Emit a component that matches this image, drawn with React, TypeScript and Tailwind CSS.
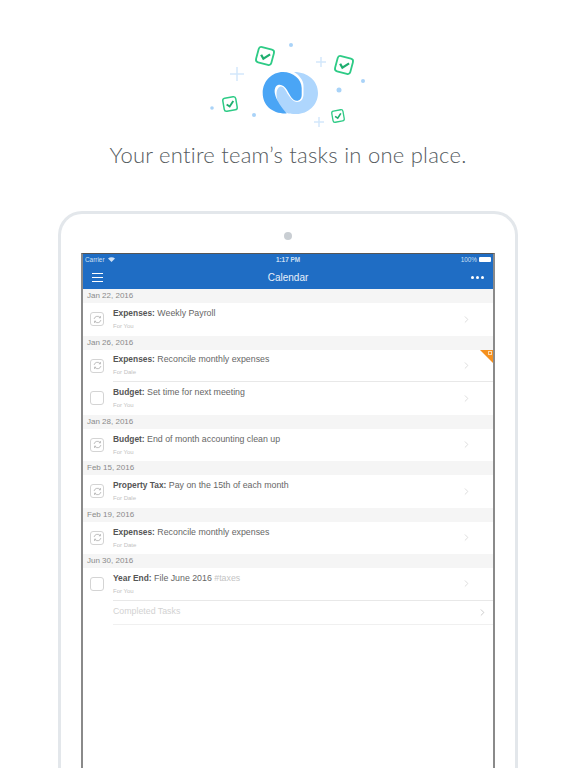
import React from 'react';
import { ChevronRight } from 'lucide-react';

type Task = { project: string; title: string; tag?: string; sub: string; repeat?: boolean; flag?: boolean };
type Section = { date: string; tasks: Task[] };

const SECTIONS: Section[] = [
  { date: 'Jan 22, 2016', tasks: [{ project: 'Expenses:', title: 'Weekly Payroll', sub: 'For You', repeat: true }] },
  {
    date: 'Jan 26, 2016',
    tasks: [
      { project: 'Expenses:', title: 'Reconcile monthly expenses', sub: 'For Dale', repeat: true, flag: true },
      { project: 'Budget:', title: 'Set time for next meeting', sub: 'For You' },
    ],
  },
  { date: 'Jan 28, 2016', tasks: [{ project: 'Budget:', title: 'End of month accounting clean up', sub: 'For You', repeat: true }] },
  { date: 'Feb 15, 2016', tasks: [{ project: 'Property Tax:', title: 'Pay on the 15th of each month', sub: 'For Dale', repeat: true }] },
  { date: 'Feb 19, 2016', tasks: [{ project: 'Expenses:', title: 'Reconcile monthly expenses', sub: 'For Date', repeat: true }] },
  { date: 'Jun 30, 2016', tasks: [{ project: 'Year End:', title: 'File June 2016', tag: '#taxes', sub: 'For You' }] },
];

const CheckBadge = ({ x, y, size, rotate }: { x: number; y: number; size: number; rotate: number }) => (
  <g transform={`translate(${x} ${y}) rotate(${rotate}) scale(${size / 16})`}>
    <rect x="-7" y="-7" width="14" height="14" rx="2.5" fill="#fff" stroke="#2ecb86" strokeWidth="1.6" />
    <path d="M-3.6 -0.2 L-0.8 2.6 L4 -2.6" fill="none" stroke="#1fae6f" strokeWidth="2" />
  </g>
);

const Plus = ({ x, y, s }: { x: number; y: number; s: number }) => (
  <path d={`M${x - s} ${y}H${x + s}M${x} ${y - s}V${y + s}`} stroke="#d3e8fb" strokeWidth="1.5" fill="none" />
);

const Logo = () => (
  <svg width="190" height="110" viewBox="0 0 190 110" className="block mr-[6px]">
    <Plus x={47} y={44} s={7} />
    <Plus x={131} y={32} s={5} />
    <Plus x={129} y={92} s={5} />
    <circle cx="101" cy="15" r="2" fill="#a9d3f8" />
    <circle cx="173" cy="51" r="2" fill="#a9d3f8" />
    <circle cx="149" cy="60" r="2.5" fill="#a9d3f8" />
    <circle cx="22" cy="78" r="1.8" fill="#a9d3f8" />
    <circle cx="64" cy="85" r="2" fill="#a9d3f8" />
    <CheckBadge x={75} y={26} size={18} rotate={15} />
    <CheckBadge x={154} y={35} size={18} rotate={15} />
    <CheckBadge x={40} y={74} size={15} rotate={-10} />
    <CheckBadge x={148} y={86} size={13} rotate={-10} />
    <path
      d="M104 42C118 42 128 51 128 63C128 75 118 84 106.7 84C102 84 97 84 93 81C89 76 86.5 70 86.5 64C86.5 59 89 56.5 91 56.5C94 56.5 96 61 98 64.5C101 69 104 72 107 72C111 72 113.5 69 113.5 64V56C113.5 50 109 45 104 42Z"
      fill="#aed6fd"
    />
    <path
      d="M96.7 83.5C82 84 72.7 75 72.7 63C72.7 51 82 42 93 42C103 42 111.7 49 111.7 58V65C111.7 69 109 71 106.7 70.7C102 70.5 100 65 97 60C95 56.5 91.5 54 88 55C85 56 84 60 85 64C86 70 92 78 96.7 83.5Z"
      fill="#4aa5f5"
    />
  </svg>
);

const RepeatBox = () => (
  <div className="w-[14px] h-[14px] rounded-[3px] border border-[#d4d4d4] flex items-center justify-center">
    <svg width="9" height="9" viewBox="0 0 10 10" fill="none" stroke="#a6a6a6" strokeWidth="0.8">
      <path d="M1.2 4.4A3.8 3.8 0 0 1 8 3M8.8 5.6A3.8 3.8 0 0 1 2 7" />
      <path d="M8.3 1.2V3.1H6.5M1.7 8.8V6.9H3.5" />
    </svg>
  </div>
);

const TaskRow = ({ task, divider }: { task: Task; divider: boolean }) => (
  <div className="relative h-[32.5px] flex">
    <div className="w-[30px] shrink-0 flex items-center justify-center pr-[2px]">
      {task.repeat ? <RepeatBox /> : <div className="w-[14px] h-[14px] rounded-[3px] border border-[#d4d4d4]" />}
    </div>
    <div className={`flex-1 flex items-center ${divider ? 'border-b border-[#e8e8e8]' : ''}`}>
      <div className="flex-1 -mt-[1px]">
        <p className="text-[8.8px] leading-[12px] text-[#666] whitespace-nowrap">
          <span className="text-[8.4px] font-bold text-[#555]">{task.project}</span> {task.title}{' '}
          {task.tag && <span className="text-[#c4c4c4]">{task.tag}</span>}
        </p>
        <p className="text-[6px] leading-[8px] mt-[3px] text-[#c2c2c2]">{task.sub}</p>
      </div>
      <ChevronRight size={11} strokeWidth={1.5} className="text-[#cdcdcd] mr-[21px]" />
    </div>
    {task.flag && (
      <>
        <div className="absolute top-0 right-0 w-0 h-0 border-t-[13px] border-l-[13px] border-t-[#f5901e] border-l-transparent" />
        <div className="absolute top-[1px] right-[1px] w-[4px] h-[4px] border-[0.5px] border-[#fbd9ae]" />
      </>
    )}
  </div>
);

const App: React.FC = () => {
  return (
    <div className="w-[576px] h-[768px] overflow-hidden bg-white font-['Open_Sans',sans-serif]">
      <div className="flex justify-center pt-[30px]">
        <Logo />
      </div>
      <h1 className="text-center text-[22px] leading-[30px] font-light text-[#555b60] font-['Lato',sans-serif] tracking-[0.25px]">
        Your entire team’s tasks in one place.
      </h1>

      {/* Device */}
      <div className="mx-[58px] mt-[41px] h-[600px] rounded-t-[24px] border-[3px] border-b-0 border-[#e3e7eb] px-[20px] pt-[18px]">
        <div className="w-[8px] h-[8px] mx-auto rounded-full bg-[#c9ced3]" />
        <div className="mt-[13px] h-[600px] border-x-2 border-t border-[#8a8a8a] border-t-[#555] bg-white font-['Liberation_Sans',sans-serif]">
          {/* Nav */}
          <div className="bg-[#1f6dc4] h-[35px] text-white">
            <div className="relative flex items-center justify-between h-[12px] px-[2px] text-[6.4px] text-[#cfe0f3]">
              <span className="flex items-center gap-[3px]">
                Carrier
                <svg width="7" height="5" viewBox="0 0 7 5" fill="#cfe0f3">
                  <path d="M0 1.6A5 5 0 0 1 7 1.6L3.5 5Z" />
                </svg>
              </span>
              <span className="absolute left-1/2 -translate-x-1/2 font-bold">1:17 PM</span>
              <span className="flex items-center gap-[2px]">
                100%
                <span className="w-[12px] h-[5px] rounded-[1px] bg-white" />
              </span>
            </div>
            <div className="relative flex items-center justify-between h-[22px] pl-[9px] pr-[9px]">
              <div className="flex flex-col gap-[3px] w-[11px]">
                <span className="h-px bg-white" />
                <span className="h-px bg-white" />
                <span className="h-px bg-white" />
              </div>
              <span className="absolute left-1/2 -translate-x-1/2 text-[10px] text-[#e8f0fa]">Calendar</span>
              <div className="flex gap-[2px]">
                <span className="w-[3px] h-[3px] rounded-full bg-white" />
                <span className="w-[3px] h-[3px] rounded-full bg-white" />
                <span className="w-[3px] h-[3px] rounded-full bg-white" />
              </div>
            </div>
          </div>

          {/* List */}
          {SECTIONS.map(section => (
            <div key={section.date}>
              <div className="h-[14px] bg-[#f5f5f5] flex items-center pl-[4px] text-[8px] text-[#8a8a8a]">{section.date}</div>
              {section.tasks.map((task, i) => (
                <TaskRow key={task.title + i} task={task} divider={i < section.tasks.length - 1 || section.date === 'Jun 30, 2016'} />
              ))}
            </div>
          ))}
          <div className="ml-[30px] h-[24px] flex items-center border-b border-[#f0f0f0] text-[8.8px] text-[#d2d2d2]">
            <span className="flex-1">Completed Tasks</span>
            <ChevronRight size={11} strokeWidth={1.5} className="text-[#b5b5b5] mr-[5px]" />
          </div>
        </div>
      </div>
    </div>
  );
};

export default App;
